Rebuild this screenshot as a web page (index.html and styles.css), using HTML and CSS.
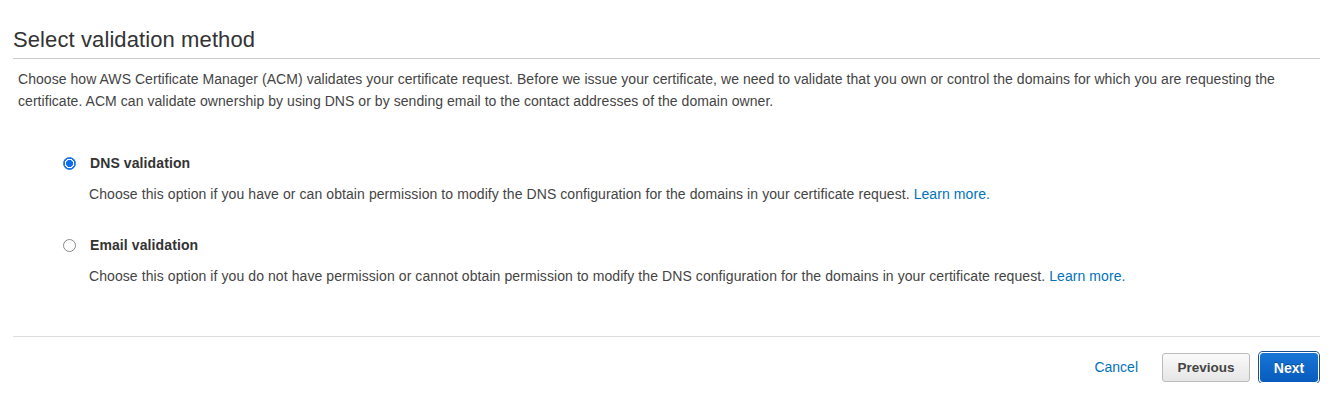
FILE: index.html
```html
<!DOCTYPE html>
<html>
<head>
<meta charset="utf-8">
<link rel="stylesheet" href="styles.css">
</head>
<body>
<div class="page">
  <h2 class="title">Select validation method</h2>
  <p class="intro">Choose how AWS Certificate Manager (ACM) validates your certificate request. Before we issue your certificate, we need to validate that you own or control the domains for which you are requesting the certificate. ACM can validate ownership by using DNS or by sending email to the contact addresses of the domain owner.</p>
  <div class="options">
    <div class="option">
      <div class="option-head">
        <span class="radio checked"></span>
        <span class="option-label">DNS validation</span>
      </div>
      <p class="option-desc">Choose this option if you have or can obtain permission to modify the DNS configuration for the domains in your certificate request. <a class="link" href="#">Learn more.</a></p>
    </div>
    <div class="option">
      <div class="option-head">
        <span class="radio"></span>
        <span class="option-label">Email validation</span>
      </div>
      <p class="option-desc">Choose this option if you do not have permission or cannot obtain permission to modify the DNS configuration for the domains in your certificate request. <a class="link" href="#">Learn more.</a></p>
    </div>
  </div>
  <div class="footer">
    <a class="cancel" href="#">Cancel</a>
    <button class="btn btn-secondary">Previous</button>
    <button class="btn btn-primary">Next</button>
  </div>
</div>
</body>
</html>
```

FILE: styles.css
```css
* { box-sizing: border-box; }
body {
  margin: 0;
  background: #fff;
  font-family: "Liberation Sans", Arial, Helvetica, sans-serif;
  color: #444;
}
.page {
  padding: 27px 15px 0 13px;
}
.title {
  margin: 0;
  font-size: 22px;
  font-weight: normal;
  line-height: 26px;
  color: #333;
  letter-spacing: 0.1px;
  padding-bottom: 5px;
  border-bottom: 1px solid #ccc;
}
.intro {
  margin: 9px 0 0 5px;
  font-size: 14px;
  line-height: 22px;
  letter-spacing: 0.05px;
  color: #444;
}
.options {
  margin-top: 43px;
  padding-left: 50px;
}
.option {
  margin-bottom: 34px;
}
.option:last-child {
  margin-bottom: 0;
}
.option-head {
  display: flex;
  align-items: center;
  gap: 14px;
  height: 16px;
}
.radio {
  width: 13px;
  height: 13px;
  border-radius: 50%;
  border: 1px solid #8a8a8a;
  background: #fff;
  flex: none;
}
.radio.checked {
  border: 1px solid #1a73e8;
  background: radial-gradient(circle, #0b6cf0 0 3.3px, #fff 3.8px 4.6px, #1a73e8 5px);
}
.option-label {
  font-size: 14px;
  font-weight: bold;
  color: #333;
  letter-spacing: 0.1px;
}
.option-desc {
  margin: 14px 0 0 26px;
  font-size: 14px;
  line-height: 18px;
  letter-spacing: 0.08px;
  color: #444;
}
.link {
  color: #0073bb;
  text-decoration: none;
}
.footer {
  margin-top: 51px;
  border-top: 1px solid #ddd;
  display: flex;
  justify-content: flex-end;
  align-items: center;
  padding-top: 15px;
  padding-right: 1px;
}
.cancel {
  color: #0073bb;
  text-decoration: none;
  font-size: 14px;
  margin-right: 24px;
  margin-top: -2px;
}
.btn {
  font-family: "Liberation Sans", Arial, Helvetica, sans-serif;
  font-size: 13.5px;
  font-weight: bold;
  cursor: pointer;
}
.btn-secondary {
  width: 88px;
  height: 29px;
  border: 1px solid #bbb;
  border-radius: 3px;
  background: linear-gradient(#fafafa, #e6e6e6);
  color: #444;
  margin-right: 9px;
}
.btn-primary {
  width: 60px;
  height: 31px;
  border: 1px solid #fff;
  border-radius: 4px;
  box-shadow: 0 0 0 1px #1b4f8e;
  background: linear-gradient(#1876d6, #075bbd);
  color: #fff;
  font-size: 14px;
  text-shadow: 0 -1px 0 rgba(0,0,0,0.3);
}
```
